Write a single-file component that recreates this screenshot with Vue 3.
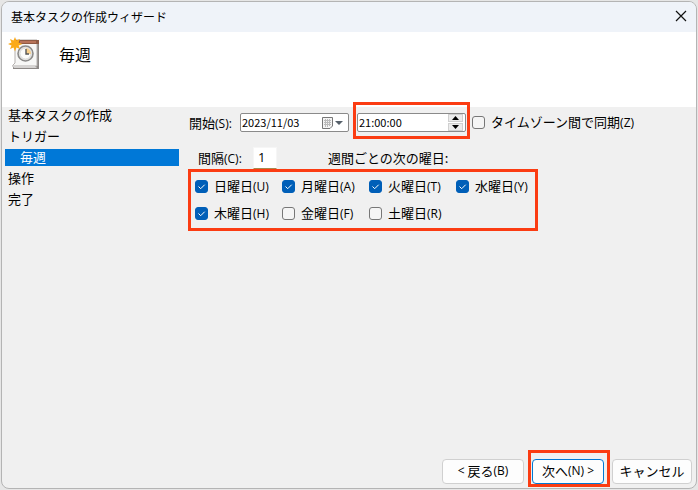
<template>
  <main class="wizard">
    <header class="title-bar">
      <h1 class="title">基本タスクの作成ウィザード</h1>
      <button type="button" class="close" aria-label="閉じる">
        <svg width="12" height="12" viewBox="0 0 12 12" aria-hidden="true">
          <path d="M1 1L11 11M11 1L1 11" fill="none" stroke="#111" stroke-width="1.2" />
        </svg>
      </button>
    </header>

    <div class="page-header">
      <svg class="task-icon" width="34" height="34" viewBox="0 0 34 34" aria-hidden="true">
        <path d="M7 3H31V32H5V29L7 26Z" fill="#8c8886" />
        <path d="M7 3H29V29H4L7 26Z" fill="#f7f7f6" stroke="#b5b1af" />
        <path d="M4 28H26L29 31H6Z" fill="#d5d3d2" />
        <path d="M8 3H31V7H8Z" fill="#8f5a44" />
        <path d="M12 4H28V6H12Z" fill="#b9745a" />
        <circle cx="17.500" cy="16.500" r="7.500" fill="#e9e8e6" stroke="#8b8a89" stroke-width="1.600" />
        <circle cx="17.500" cy="16.500" r="5.500" fill="#fbfbfa" stroke="#c8c8c8" stroke-width=".6" />
        <path d="M18 17V11A6 6 0 0 1 23 17Z" fill="#f7cf8c" />
        <path d="M18 12V17H21" fill="none" stroke="#555" stroke-width="1.400" />
        <path
          d="M7 0L8.400 3.500L12 2L10.600 5.600L14.500 7L10.600 8.600L12 12L8.400 10.600L7 14.500L5.500 10.600L2 12L3.500 8.600L0 7L3.500 5.600L2 2L5.500 3.500Z"
          fill="#fbaa19"
        />
      </svg>
      <h2 class="page-title">毎週</h2>
    </div>

    <div class="body">
      <nav class="steps" aria-label="手順">
        <ul>
          <li
            v-for="step in steps"
            :key="step.name"
            :class="{ child: step.child, active: step.name === current }"
          >
            {{ step.name }}
          </li>
        </ul>
      </nav>

      <form class="form" @submit.prevent>
        <div class="row start-row">
          <label class="start-label" for="start-date">開始<span class="key">(S):</span></label>
          <div class="field">
            <input id="start-date" v-model="startDate" type="text" />
            <button type="button" class="calendar" aria-label="カレンダー">
              <svg width="22" height="14" viewBox="0 0 22 14" aria-hidden="true">
                <path d="M1.500 1.500H11.500V10L9 12.500H1.500Z" fill="#f4f4f4" stroke="#777" />
                <path d="M3 4.500H10M3 6.500H10M3 8.500H10M4.500 3V11M6.500 3V11M8.500 3V10" stroke="#bbb" fill="none" />
                <path d="M14 5H22L18 9Z" fill="#56606a" />
              </svg>
            </button>
          </div>
          <div class="field time-field mark">
            <input v-model="startTime" type="text" aria-label="開始時刻" />
            <div class="spinner">
              <button type="button" aria-label="増やす">
                <svg width="7" height="4" viewBox="0 0 7 4" aria-hidden="true"><path d="M0 4L3.500 0L7 4Z" /></svg>
              </button>
              <button type="button" aria-label="減らす">
                <svg width="7" height="4" viewBox="0 0 7 4" aria-hidden="true"><path d="M0 0L3.500 4L7 0Z" /></svg>
              </button>
            </div>
          </div>
          <label class="check">
            <input v-model="syncZones" type="checkbox" />
            <span>タイムゾーン間で同期<span class="key">(Z)</span></span>
          </label>
        </div>

        <div class="row interval-row">
          <label class="interval-label" for="interval">間隔<span class="key">(C):</span></label>
          <input id="interval" v-model="interval" class="interval" type="text" />
          <span>週間ごとの次の曜日:</span>
        </div>

        <div class="days mark">
          <label v-for="day in days" :key="day.key" class="check">
            <input v-model="day.checked" type="checkbox" />
            <span>{{ day.name }}<span class="key">({{ day.key }})</span></span>
          </label>
        </div>
      </form>
    </div>

    <footer class="footer">
      <button type="button" class="btn back"><span class="key">&lt;</span> 戻る<span class="key">(B)</span></button>
      <div class="next-wrap mark">
        <button type="button" class="btn next">次へ<span class="key">(N) &gt;</span></button>
      </div>
      <button type="button" class="btn cancel">キャンセル</button>
    </footer>
  </main>
</template>

<script setup>
import { ref } from 'vue'

const steps = [
  { name: '基本タスクの作成' },
  { name: 'トリガー' },
  { name: '毎週', child: true },
  { name: '操作' },
  { name: '完了' }
]
const current = ref('毎週')

const startDate = ref('2023/11/03')
const startTime = ref('21:00:00')
const syncZones = ref(false)
const interval = ref('1')

const days = ref([
  { name: '日曜日', key: 'U', checked: true },
  { name: '月曜日', key: 'A', checked: true },
  { name: '火曜日', key: 'T', checked: true },
  { name: '水曜日', key: 'Y', checked: true },
  { name: '木曜日', key: 'H', checked: true },
  { name: '金曜日', key: 'F', checked: false },
  { name: '土曜日', key: 'R', checked: false }
])
</script>

<style>
body {
  background-color: #e6e6e6;
}

#app {
  display: flex;
  min-height: 100vh;
}
</style>

<style scoped>
.wizard {
  flex: 1;
  display: flex;
  flex-direction: column;
  margin: 1px;
  border: 1px solid #b4b4b4;
  border-radius: 8px;
  overflow: hidden;
  background-color: #f0f0f0;
  color: #000;
  font-family: "Noto Sans CJK JP", sans-serif;
  font-size: 13px;
  line-height: 15px;
}

button,
input {
  box-sizing: border-box;
  margin: 0;
  padding: 0;
  color: inherit;
  font: inherit;
}

button {
  display: flex;
  align-items: center;
  justify-content: center;
  border: none;
  background: none;
}

.key {
  font-family: "Open Sans", sans-serif;
  font-size: 12px;
  line-height: 12px;
}

.title-bar {
  display: flex;
  align-items: center;
  justify-content: space-between;
  height: 28px;
  padding: 0 9px 2px;
  background-color: #eff3f9;
}

.title {
  margin: 0;
  font-size: 12px;
  font-weight: 400;
}

.close {
  width: 12px;
  height: 12px;
}

.page-header {
  display: flex;
  gap: 17px;
  height: 70px;
  padding: 5px 6px 0;
  background-color: #fff;
}

.page-title {
  margin: 0;
  font-size: 16px;
  font-weight: 400;
  line-height: 34px;
}

.body {
  flex: 1;
  display: flex;
  gap: 10px;
}

.steps {
  flex: 0 0 177px;
}

.steps ul {
  display: flex;
  flex-direction: column;
  gap: 4px;
  margin: 0;
  padding: 0 0 0 3px;
  list-style: none;
}

.steps li {
  padding: 0 0 2px 3px;
}

.steps .child {
  padding-left: 15px;
}

.steps .active {
  background-color: #0078d7;
  color: #fff;
}

.form {
  flex: 1;
}

.row {
  display: flex;
  align-items: center;
  white-space: nowrap;
}

.row label,
.row span {
  padding-bottom: 1px;
}

/* red frame that calls out a control */
.mark {
  position: relative;
}

.mark::after {
  content: "";
  position: absolute;
  border: 3px solid #fb3c12;
  pointer-events: none;
}

.start-row {
  gap: 8px;
  padding-top: 6px;
}

.start-label {
  width: 43px;
}

.field {
  display: flex;
  align-items: center;
  box-sizing: border-box;
  width: 109px;
  height: 19px;
  border: 1px solid #8a8a8a;
  border-radius: 2px;
  background-color: #fff;
}

.field input {
  flex: 1;
  min-width: 0;
  height: 17px;
  padding: 0 0 2px 1px;
  border: none;
  background: none;
  font-size: 11px;
  outline: none;
}

.calendar {
  margin-right: 5px;
}

.time-field::after {
  inset: -12px -5px -8px -5px;
}

.spinner {
  display: flex;
  flex-direction: column;
  gap: 1px;
  margin-right: 2px;
}

.spinner button {
  width: 15px;
  height: 8px;
  border: 1px solid #d0d0d0;
  background-color: #ececec;
}

.check {
  display: flex;
  align-items: center;
  gap: 6px;
  white-space: nowrap;
}

.check span {
  padding-bottom: 2px;
}

.start-row .check {
  margin-left: -2px;
  padding-bottom: 0;
}

.check input {
  appearance: none;
  width: 13px;
  height: 13px;
  border: 1px solid #777;
  border-radius: 3px;
  background-color: #f5f5f5;
}

.check input:checked {
  border-color: #005fb8;
  background: #005fb8 url("data:image/svg+xml,%3Csvg xmlns='http://www.w3.org/2000/svg' viewBox='0 0 11 11'%3E%3Cpath d='M2.500 5.500L4.700 7.700L8.700 3.700' fill='none' stroke='white'/%3E%3C/svg%3E") center / 11px no-repeat;
}

.interval-row {
  margin-top: 15px;
  padding-left: 9px;
}

.interval-label {
  width: 55px;
}

.interval {
  width: 24px;
  height: 22px;
  margin-right: 51px;
  padding: 0 0 2px 4px;
  border: 1px solid #f6f6f6;
  border-bottom-color: #a58a50;
  background-color: #fff;
  font-family: "Open Sans", sans-serif;
}

.days {
  display: grid;
  grid-template-columns: repeat(4, 87px);
  row-gap: 10px;
  width: 350px;
  box-sizing: border-box;
  margin-left: -1px;
  padding: 9px 0 9px 7px;
}

.days::after {
  inset: 0;
}

.footer {
  display: flex;
  justify-content: flex-end;
  gap: 8px;
  padding: 0 4px 4px;
}

.btn {
  height: 25px;
  padding-bottom: 2px;
  border: 1px solid #d0d0d0;
  border-radius: 4px;
  background-color: #fdfdfd;
  white-space: pre;
}

.back {
  width: 82px;
}

.next {
  width: 72px;
  border-color: #0078d4;
}

.next-wrap::after {
  inset: -9px -6px -3px -4px;
}

.cancel {
  width: 80px;
}
</style>
